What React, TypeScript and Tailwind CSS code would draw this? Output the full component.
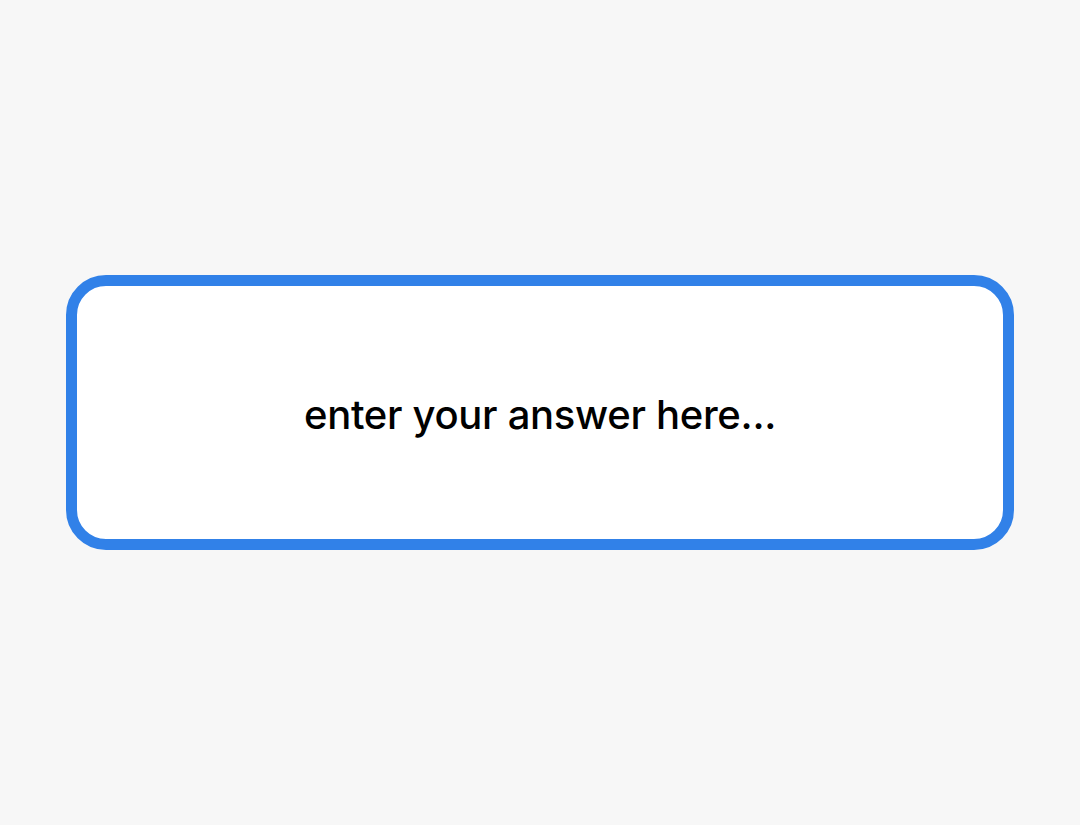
export default function App() {
  return (
    <div className="min-h-screen w-full bg-[#f7f7f7] flex items-center justify-center">
      <div className="w-[948px] h-[275px] bg-white border-[11px] border-[#3181e8] rounded-[40px] flex items-center justify-center">
        <span
          className="text-[40px] font-medium text-black tracking-[-0.3px] pt-[4px]"
          style={{ fontFamily: 'Inter, "Noto Sans", sans-serif' }}
        >
          enter your answer here...
        </span>
      </div>
    </div>
  );
}
